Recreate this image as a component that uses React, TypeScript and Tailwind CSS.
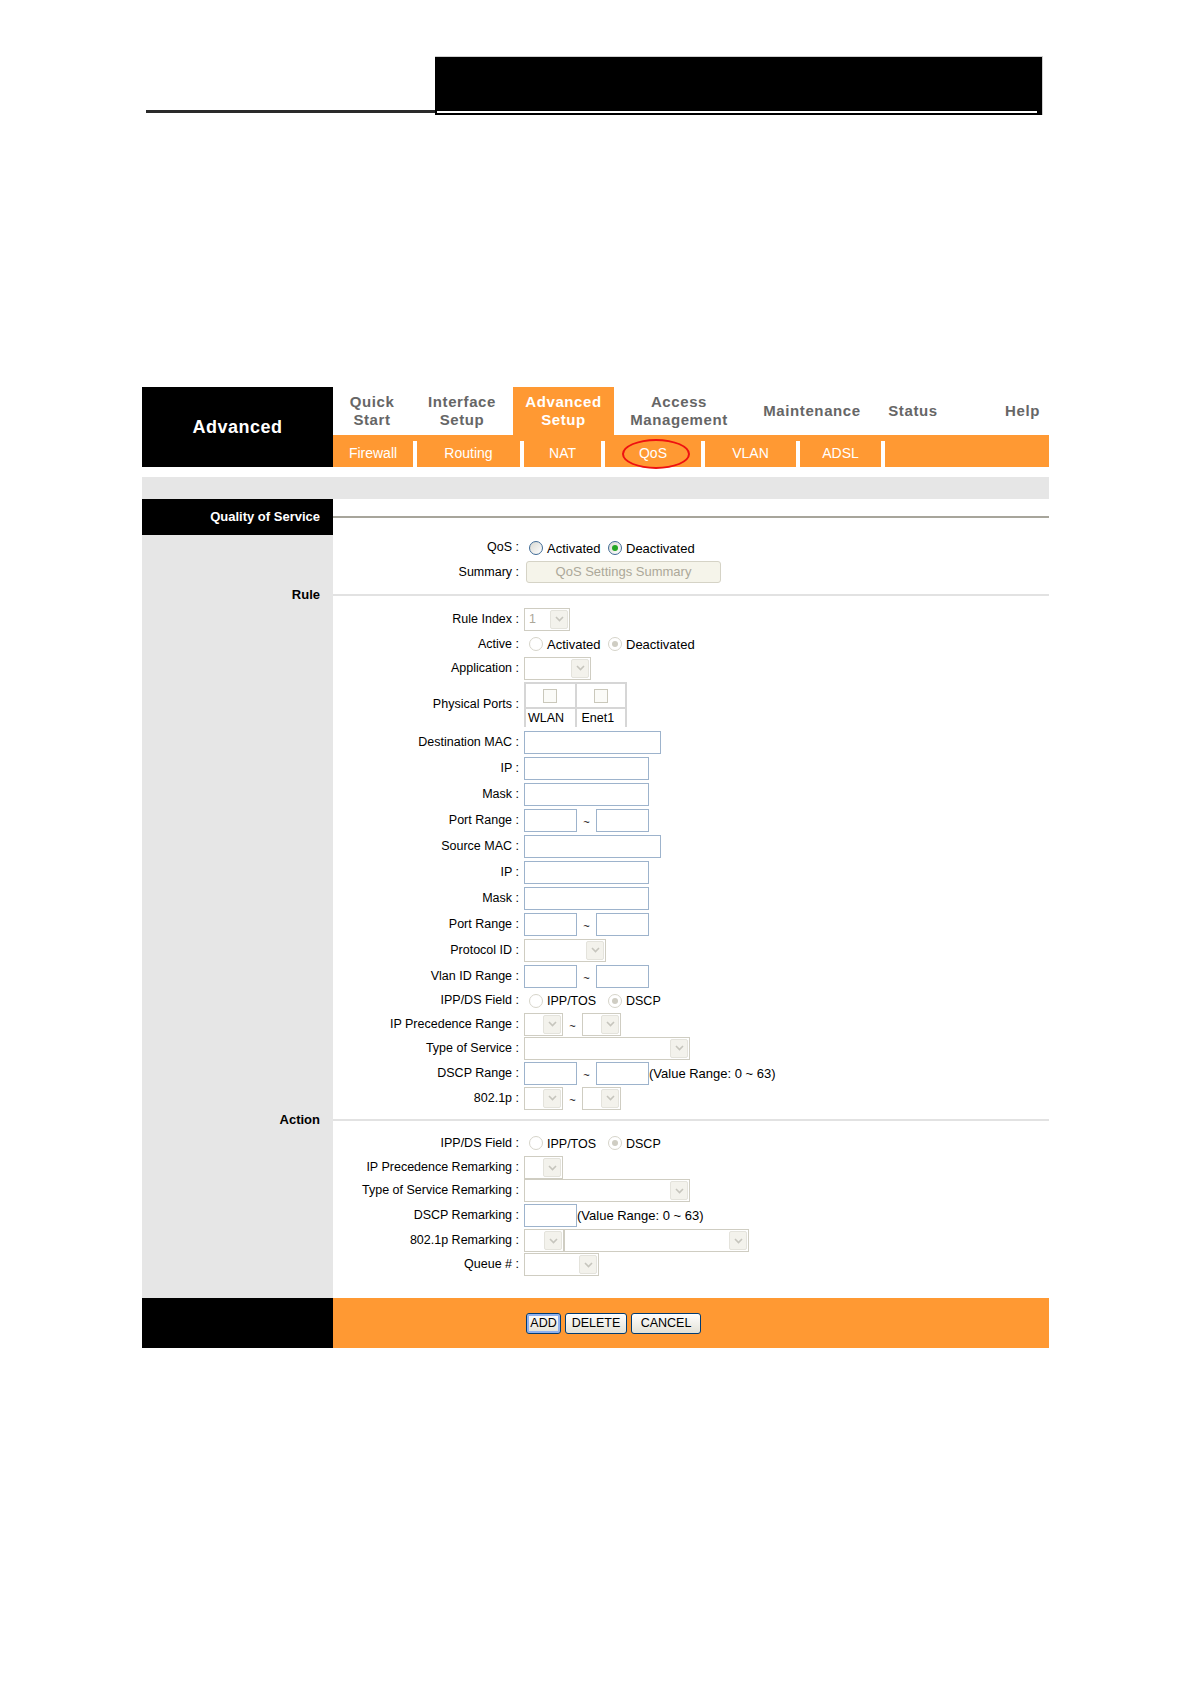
import React from "react";

function Arrow() {
  return (
    <div className="flex w-[18px] items-center justify-center rounded-[2px] border border-[#e4e3dc] bg-[#f3f2ec]">
      <svg width="9" height="6" viewBox="0 0 9 6">
        <path d="M1 1l3.5 3.5L8 1" fill="none" stroke="#c6c5bd" strokeWidth="1.6" />
      </svg>
    </div>
  );
}

function Select({ w, value }: { w: string; value?: string }) {
  return (
    <div className={`flex h-[23px] ${w} items-stretch border border-[#cfcdc2] bg-white p-[1px]`}>
      <div className="flex flex-1 items-center overflow-hidden pl-[3px] text-[12.5px] text-[#aca899]">{value}</div>
      <Arrow />
    </div>
  );
}

function Input({ w }: { w: string }) {
  return <input readOnly className={`h-[23px] ${w} border-[1.5px] border-[#9db3cc] bg-white outline-none`} />;
}

function Tilde() {
  return <div className="flex w-[19px] justify-center pt-[4px] text-[11px] leading-none">~</div>;
}

function Radio({ checked, disabled }: { checked?: boolean; disabled?: boolean }) {
  if (disabled) {
    return (
      <span className="flex h-[14px] w-[14px] items-center justify-center rounded-full border border-[#d6d4ca] bg-white">
        {checked && <span className="h-[6px] w-[6px] rounded-full bg-[#cfcdc3]" />}
      </span>
    );
  }
  return (
    <span className="flex h-[14px] w-[14px] items-center justify-center rounded-full border border-[#3f6b96] bg-gradient-to-br from-[#d9d9d2] to-white">
      {checked && <span className="h-[6px] w-[6px] rounded-full bg-[#22a522]" />}
    </span>
  );
}

function Radios({ a, b, disabled, small }: { a: string; b: string; disabled?: boolean; small?: boolean }) {
  return (
    <div className={`flex items-center ${small ? "text-[12.5px]" : "text-[13px]"}`}>
      <div className="flex w-[84px] items-center">
        <span className="ml-[5px]">
          <Radio disabled={disabled} />
        </span>
        <span className="ml-[4px] pt-[2px]">{a}</span>
      </div>
      <Radio checked disabled={disabled} />
      <span className="ml-[4px] pt-[2px]">{b}</span>
    </div>
  );
}

function Row({ h, label, children }: { h: string; label: string; children?: React.ReactNode }) {
  return (
    <div className={`flex ${h}`}>
      <div className="w-[191px] bg-[#e6e6e6]" />
      <div className="flex w-[186px] items-center justify-end whitespace-nowrap text-[12.5px]">{label}</div>
      <div className="ml-[5px] flex flex-1 items-center">{children}</div>
    </div>
  );
}

function Sep({ h, title }: { h: string; title: string }) {
  return (
    <div className={`flex ${h}`}>
      <div className="flex w-[191px] items-center justify-end bg-[#e6e6e6] pr-[13px] text-[13px] font-bold">{title}</div>
      <div className="flex flex-1 items-center">
        <div className="h-[2px] w-full bg-[#e2e2e2]" />
      </div>
    </div>
  );
}

function Check() {
  return <span className="block h-[14px] w-[14px] border border-[#cac8bb] bg-[#fbfbf8]" />;
}

function Tab({ w, children, active }: { w: string; children: React.ReactNode; active?: boolean }) {
  return (
    <div
      className={`flex ${w} items-center justify-center text-center ${active ? "bg-[#ff9933] text-white" : ""}`}
    >
      <div>{children}</div>
    </div>
  );
}

function Sub({ w, children }: { w: string; children: React.ReactNode }) {
  return (
    <>
      <div className={`flex ${w} items-center justify-center pt-[4px]`}>{children}</div>
      <div className="mt-[6px] w-[4px] bg-white" />
    </>
  );
}

export default function App() {
  return (
    <div className="min-h-[1684px] w-[1190px] bg-white font-['Liberation_Sans',Arial,sans-serif] text-black">
      {/* page header */}
      <div className="flex items-end pl-[146px] pt-[56px]">
        <div className="mb-[2px] h-[3px] w-[289px] bg-[#2a2a2a]" />
        <div className="flex h-[59px] w-[608px] flex-col justify-end border-r border-t border-[#d0d0d0] bg-black pb-[2px] pl-[2px] pr-[5px]">
          <div className="h-[2px] bg-white" />
        </div>
      </div>

      {/* main panel */}
      <div className="ml-[142px] mt-[272px] w-[907px]">
        {/* nav */}
        <div className="flex h-[80px]">
          <div className="flex w-[191px] items-center justify-center bg-black text-[18px] font-bold tracking-[0.5px] text-white">
            Advanced
          </div>
          <div className="flex flex-1 flex-col">
            <div className="flex h-[48px] text-[15px] font-bold leading-[18px] tracking-[0.6px] text-[#666666]">
              <Tab w="w-[78px]">
                Quick
                <br />
                Start
              </Tab>
              <Tab w="w-[102px]">
                Interface
                <br />
                Setup
              </Tab>
              <Tab w="w-[101px]" active>
                Advanced
                <br />
                Setup
              </Tab>
              <Tab w="w-[130px]">
                Access
                <br />
                Management
              </Tab>
              <Tab w="w-[136px]">Maintenance</Tab>
              <Tab w="w-[66px]">Status</Tab>
              <div className="flex flex-1 items-center justify-end pr-[9px]">Help</div>
            </div>
            <div className="relative flex h-[32px] bg-[#ff9933] text-[14px] text-white">
              <Sub w="w-[80px]">Firewall</Sub>
              <Sub w="w-[103px]">Routing</Sub>
              <Sub w="w-[77px]">NAT</Sub>
              <Sub w="w-[96px]">QoS</Sub>
              <Sub w="w-[91px]">VLAN</Sub>
              <Sub w="w-[81px]">ADSL</Sub>
              <div className="pointer-events-none absolute left-[289px] top-[4px] h-[30px] w-[68px] rounded-[50%] border-2 border-[#ee1111]" />
            </div>
          </div>
        </div>

        {/* gray strip */}
        <div className="mt-[10px] h-[22px] bg-[#e6e6e6]" />

        {/* section header */}
        <div className="flex h-[36px]">
          <div className="flex w-[191px] items-center justify-end bg-black pr-[13px] text-[13px] font-bold text-white">
            Quality of Service
          </div>
          <div className="flex flex-1 items-center">
            <div className="h-[2px] w-full bg-[#a7a59b]" />
          </div>
        </div>

        {/* body */}
        <Row h="h-[25px]" label="QoS :">
          <Radios a="Activated" b="Deactivated" />
        </Row>
        <Row h="h-[24px]" label="Summary :">
          <div className="ml-[2px] flex h-[22px] w-[195px] items-center justify-center rounded-[3px] border border-[#d5d3c6] bg-[#f5f4ea] text-[13px] text-[#aca899]">
            QoS Settings Summary
          </div>
        </Row>
        <Sep h="h-[22px]" title="Rule" />
        <Row h="h-[26px]" label="Rule Index :">
          <Select w="w-[46px]" value="1" />
        </Row>
        <Row h="h-[24px]" label="Active :">
          <Radios a="Activated" b="Deactivated" disabled />
        </Row>
        <Row h="h-[24px]" label="Application :">
          <Select w="w-[67px]" />
        </Row>
        <Row h="h-[49px]" label="Physical Ports :">
          <div className="grid h-[45px] w-[103px] grid-cols-2 grid-rows-[23px_1fr] gap-[2px] bg-[#d6d6d6] p-[2px]">
            <div className="flex items-center justify-center bg-white">
              <Check />
            </div>
            <div className="flex items-center justify-center bg-white">
              <Check />
            </div>
            <div className="flex items-center bg-white pl-[2px] text-[12.5px]">WLAN</div>
            <div className="flex items-center bg-white pl-[5px] text-[12.5px]">Enet1</div>
          </div>
        </Row>
        <Row h="h-[26px]" label="Destination MAC :">
          <Input w="w-[137px]" />
        </Row>
        <Row h="h-[26px]" label="IP :">
          <Input w="w-[125px]" />
        </Row>
        <Row h="h-[26px]" label="Mask :">
          <Input w="w-[125px]" />
        </Row>
        <Row h="h-[26px]" label="Port Range :">
          <Input w="w-[53px]" />
          <Tilde />
          <Input w="w-[53px]" />
        </Row>
        <Row h="h-[26px]" label="Source MAC :">
          <Input w="w-[137px]" />
        </Row>
        <Row h="h-[26px]" label="IP :">
          <Input w="w-[125px]" />
        </Row>
        <Row h="h-[26px]" label="Mask :">
          <Input w="w-[125px]" />
        </Row>
        <Row h="h-[26px]" label="Port Range :">
          <Input w="w-[53px]" />
          <Tilde />
          <Input w="w-[53px]" />
        </Row>
        <Row h="h-[26px]" label="Protocol ID :">
          <Select w="w-[82px]" />
        </Row>
        <Row h="h-[26px]" label="Vlan ID Range :">
          <Input w="w-[53px]" />
          <Tilde />
          <Input w="w-[53px]" />
        </Row>
        <Row h="h-[23px]" label="IPP/DS Field :">
          <Radios a="IPP/TOS" b="DSCP" disabled small />
        </Row>
        <Row h="h-[24px]" label="IP Precedence Range :">
          <Select w="w-[39px]" />
          <Tilde />
          <Select w="w-[39px]" />
        </Row>
        <Row h="h-[24px]" label="Type of Service :">
          <Select w="w-[166px]" />
        </Row>
        <Row h="h-[26px]" label="DSCP Range :">
          <Input w="w-[53px]" />
          <Tilde />
          <Input w="w-[53px]" />
          <span className="pt-[2px] text-[13px]">(Value Range: 0 ~ 63)</span>
        </Row>
        <Row h="h-[24px]" label="802.1p :">
          <Select w="w-[39px]" />
          <Tilde />
          <Select w="w-[39px]" />
        </Row>
        <Sep h="h-[20px]" title="Action" />
        <Row h="h-[26px]" label="IPP/DS Field :">
          <Radios a="IPP/TOS" b="DSCP" disabled small />
        </Row>
        <Row h="h-[23px]" label="IP Precedence Remarking :">
          <Select w="w-[39px]" />
        </Row>
        <Row h="h-[23px]" label="Type of Service Remarking :">
          <Select w="w-[166px]" />
        </Row>
        <Row h="h-[26px]" label="DSCP Remarking :">
          <Input w="w-[53px]" />
          <span className="pt-[2px] text-[13px]">(Value Range: 0 ~ 63)</span>
        </Row>
        <Row h="h-[25px]" label="802.1p Remarking :">
          <Select w="w-[40px]" />
          <Select w="w-[185px]" />
        </Row>
        <Row h="h-[23px]" label="Queue # :">
          <Select w="w-[75px]" />
        </Row>
        <div className="flex h-[22px]">
          <div className="w-[191px] bg-[#e6e6e6]" />
        </div>

        {/* footer bar */}
        <div className="flex h-[50px]">
          <div className="w-[191px] bg-black" />
          <div className="flex flex-1 items-center gap-[4px] bg-[#ff9933] pl-[193px]">
            <button className="h-[21px] w-[35px] rounded-[3px] border border-[#003c74] bg-gradient-to-b from-white to-[#e3e1d6] text-[12.5px] leading-none text-black shadow-[inset_0_0_0_2px_#8fb0ee]">
              ADD
            </button>
            <button className="h-[21px] w-[62px] rounded-[3px] border border-[#003c74] bg-gradient-to-b from-white to-[#e3e1d6] text-[12.5px] leading-none text-black">
              DELETE
            </button>
            <button className="h-[21px] w-[70px] rounded-[3px] border border-[#003c74] bg-gradient-to-b from-white to-[#e3e1d6] text-[12.5px] leading-none text-black">
              CANCEL
            </button>
          </div>
        </div>
      </div>
    </div>
  );
}
